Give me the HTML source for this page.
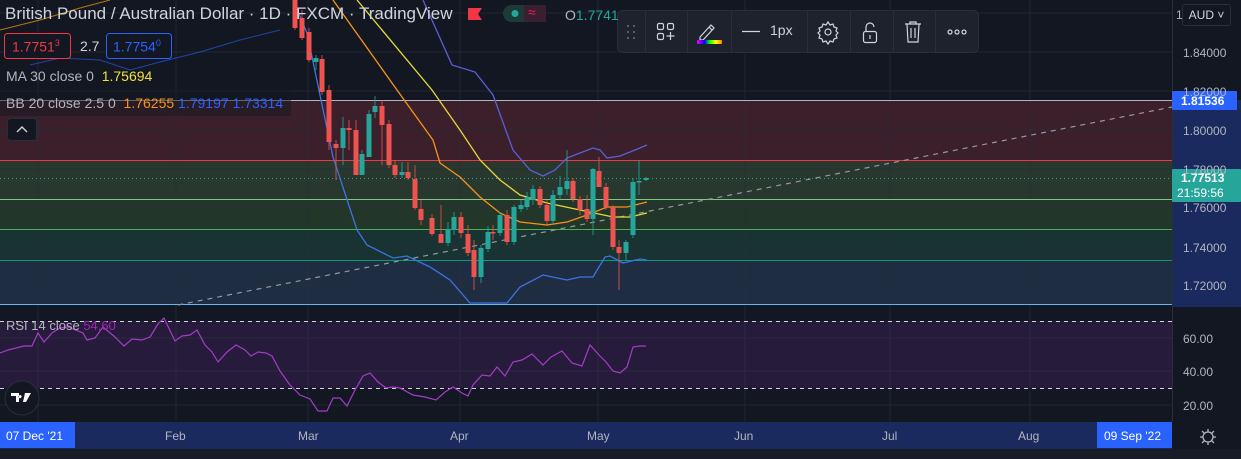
<!DOCTYPE html><html><head><meta charset="utf-8"><style>
body{margin:0;width:1241px;height:459px;background:#131722;overflow:hidden;font-family:"Liberation Sans",sans-serif;position:relative}
.a{position:absolute;white-space:nowrap}
.pl{position:absolute;left:1183px;font-size:12px;color:#b2b5be}
.tl{position:absolute;top:429px;font-size:12px;color:#b2b5be}
</style></head><body>
<svg class="a" style="left:0;top:0" width="1241" height="459">
<!-- zones -->
<rect x="0" y="100" width="1172" height="61" fill="#3b1f2b"/>
<rect x="0" y="161" width="1172" height="38" fill="#29382f"/>
<rect x="0" y="199" width="1172" height="30" fill="#22362a"/>
<rect x="0" y="229" width="1172" height="31" fill="#183331"/>
<rect x="0" y="260" width="1172" height="44" fill="#1e2d42"/>
<rect x="0" y="321" width="1172" height="67" fill="#271b3b"/>
<!-- grid -->
<g stroke="#2a2e39" stroke-opacity=".7" stroke-width="1">
<path d="M0 13H1172M0 52H1172M0 91H1172M0 130H1172M0 169H1172M0 207H1172M0 247H1172M0 285H1172M0 338H1172M0 371H1172M0 405H1172"/>
<path d="M38 0V422M176 0V422M308 0V422M460 0V422M598 0V422M745 0V422M890 0V422M1030 0V422"/>
</g>
<!-- zone lines -->
<path d="M0 100.5H1172" stroke="#b2b5be" stroke-width="1"/>
<path d="M0 160.5H1172" stroke="#f23645"/>
<path d="M0 199.5H1172" stroke="#81c784"/>
<path d="M0 229.5H1172" stroke="#4caf50"/>
<path d="M0 260.5H1172" stroke="#089981"/>
<path d="M0 304.5H1172" stroke="#64b5f6"/>
<path d="M0 178.5H1172" stroke="#26a69a" stroke-dasharray="1 3"/>
<path d="M178 305L1172 107" stroke="#9598a1" stroke-width="1.2" stroke-dasharray="5 5"/>
<!-- price axis bg -->
<rect x="1172" y="100" width="69" height="207" fill="#1b2a5e"/>
<path d="M1172.5 0V452" stroke="#2a2e39"/>
<!-- top-left leftovers -->
<polyline fill="none" stroke="#f7a600" stroke-opacity=".7" points="0,30 40,20 80,8 110,0"/>
<polyline fill="none" stroke="#2962ff" stroke-opacity=".6" points="30,65 60,58 100,60 130,70 160,62 200,52 240,40 280,30"/>
<!-- BB / MA lines -->
<polyline fill="none" stroke="#f7931a" stroke-width="1.3" points="333,0 397,90 433,140 440,163 460,177 480,197 500,213 520,222 547,225 567,222 587,215 607,207 627,207 647,202"/>
<polyline fill="none" stroke="#e5d93a" stroke-width="1.3" points="357,0 432,90 460,130 480,160 500,180 520,195 547,203 580,210 613,217 630,217 647,213"/>
<polyline fill="none" stroke="#5b5fd6" stroke-width="1.3" points="423,0 452,65 475,72 493,95 513,150 530,170 543,176 555,170 567,158 580,153 593,148 600,150 607,158 620,156 635,150 647,145"/>
<polyline fill="none" stroke="#3b74e0" stroke-width="1.3" points="293,0 307,33 333,157 357,230 367,245 393,258 407,256 430,267 450,280 470,303 507,303 520,287 543,275 567,280 580,277 593,277 605,257 610,256 623,263 640,259 647,260"/>
<!-- candles -->
<g id="c"></g>
<!-- RSI -->
<path d="M0 321.5H1172M0 388.5H1172" stroke="#d1d4dc" stroke-dasharray="4 4"/>
<polyline fill="none" stroke="#a43cc7" stroke-width="1.2" points="0,353 8,350 24,346 32,346 38,333 44,342 52,333 60,328 68,327 83,333 87,340 95,338 103,327 115,337 124,346 132,339 142,340 150,337 158,324 164,318 175,341 182,336 190,335 197,330 205,345 212,352 218,362 227,352 236,345 245,350 251,356 258,352 266,353 272,356 280,371 290,385 300,395 310,399 318,411 327,411 333,398 340,398 347,406 355,390 363,376 370,373 378,382 386,388 393,387 400,388 413,395 425,397 436,400 445,392 453,387 462,393 468,396 473,385 482,375 490,376 497,367 505,376 513,362 522,360 532,354 543,365 551,357 562,351 572,363 582,366 590,345 600,356 606,362 613,371 620,373 627,367 633,347 640,346 646,346"/>
<!-- time axis -->
<rect x="0" y="422" width="1241" height="27" fill="#1b2a5e"/>
<rect x="0" y="449" width="1241" height="10" fill="#181c27"/>
<rect x="0" y="422" width="75" height="26" fill="#2962ff"/>
<rect x="1097" y="422" width="75" height="26" fill="#2962ff"/>
<rect x="1172" y="422" width="69" height="27" fill="#131722"/>
<circle cx="1208" cy="437" r="5" fill="none" stroke="#b2b5be" stroke-width="1.3"/>
<path d="M1208 429v3M1208 442v3M1200 437h3M1213 437h3M1202 431l2 2M1212 441l2 2M1214 431l-2 2M1204 441l-2 2" stroke="#b2b5be" stroke-width="1.3"/>
<!-- logo -->
<circle cx="22" cy="398" r="17" fill="#131722" stroke="#2a2e39"/>
<path d="M11 393h8v9h-3v-6h-5z M20 395a1.6 1.6 0 1 0 .1 0z M25 393h6l-5 9h-3z" fill="#fff"/>
<!-- price labels -->
<rect x="1172" y="91" width="65" height="19" fill="#2962ff" rx="1"/>
<rect x="1172" y="169" width="69" height="33" fill="#26a69a" rx="1"/>
<!-- toolbar -->
<rect x="617.5" y="10.5" width="361" height="42" rx="5" fill="#1e222d" stroke="#2a2e39"/>
<path d="M645.5 11V52M687.5 11V52M731.5 11V52M807.5 11V52M850.5 11V52M893.5 11V52M935.5 11V52" stroke="#2a2e39"/>
<g fill="#6a6d78"><circle cx="628" cy="26" r="1"/><circle cx="634" cy="26" r="1"/><circle cx="628" cy="32" r="1"/><circle cx="634" cy="32" r="1"/><circle cx="628" cy="38" r="1"/><circle cx="634" cy="38" r="1"/></g>
<g fill="none" stroke="#d1d4dc" stroke-width="1.2">
<rect x="657.5" y="23.5" width="6" height="6" rx="1.5"/><rect x="667.5" y="23.5" width="6" height="6" rx="1.5"/><rect x="657.5" y="33.5" width="6" height="6" rx="1.5"/>
<path d="M670.5 32v8M666.5 36h8"/>
<path d="M700 37l11-12 3 3-11 12h-3z M709 27l3 3"/>
<path d="M742 31.5h18"/>
<circle cx="828" cy="32" r="3"/>
<path d="M828 22l2 3 3-1 1 3 3 1-1 3 2 2-2 2 1 3-3 1-1 3-3-1-2 3-2-3-3 1-1-3-3-1 1-3-2-2 2-2-1-3 3-1 1-3 3 1z"/>
<rect x="863.5" y="31.5" width="13" height="11" rx="2"/><path d="M866 31v-4a4 4 0 0 1 8 0" /><path d="M870 35v4"/>
<path d="M905 24h16M910 24v-2h6v2M907 24l1 18h10l1-18M911 28v10M915 28v10"/>
<circle cx="950" cy="32" r="2"/><circle cx="957" cy="32" r="2"/><circle cx="964" cy="32" r="2"/>
</g>
<defs><linearGradient id="rb"><stop offset="0" stop-color="#f0f"/><stop offset=".3" stop-color="#00f"/><stop offset=".5" stop-color="#0f0"/><stop offset=".75" stop-color="#ff0"/><stop offset="1" stop-color="#f80"/></linearGradient></defs>
<rect x="697" y="40" width="25" height="4" rx="1" fill="url(#rb)"/>
<!-- header overlays -->
<rect x="0" y="90" width="291" height="26" fill="#131722" fill-opacity=".5"/>
<rect x="7.5" y="118.5" width="29" height="22" rx="3" fill="#131722" stroke="#2a2e39"/>
<path d="M17 132l5-5 5 5" fill="none" stroke="#d1d4dc" stroke-width="1.4"/>
<rect x="4.5" y="33.5" width="66" height="25" rx="3" fill="#131722" stroke="#f23645"/>
<rect x="106.5" y="33.5" width="65" height="25" rx="3" fill="#131722" stroke="#2962ff"/>
<path d="M468 8h14l-4 6 4 6h-14z" fill="#f23645"/>
<rect x="503" y="5" width="43" height="17" rx="8.5" fill="#1e3a36"/>
<rect x="524" y="5" width="22" height="17" fill="#3a1f2e"/>
<circle cx="515" cy="13.5" r="3.5" fill="#26a69a"/>
</svg>
<div class="a" style="left:5px;top:4px;font-size:17px;color:#d1d4dc">British Pound / Australian Dollar · 1D · FXCM · TradingView</div>
<div class="a" style="left:528px;top:4px;font-size:14px;color:#e91e63">≈</div>
<div class="a" style="left:565px;top:7px;font-size:14px;color:#b2b5be">O<span style="color:#26a69a">1.7741</span></div>
<div class="a" style="left:12px;top:38px;font-size:14px;color:#f23645">1.7751<sup style="font-size:9px">3</sup></div>
<div class="a" style="left:80px;top:38px;font-size:14px;color:#d1d4dc">2.7</div>
<div class="a" style="left:113px;top:38px;font-size:14px;color:#2962ff">1.7754<sup style="font-size:9px">0</sup></div>
<div class="a" style="left:6px;top:68px;font-size:14px;color:#b2b5be">MA 30 close 0 &nbsp;<span style="color:#f2e33a">1.75694</span></div>
<div class="a" style="left:6px;top:95px;font-size:14px;color:#b2b5be">BB 20 close 2.5 0 &nbsp;<span style="color:#f7931a">1.76255</span> <span style="color:#2962ff">1.79197 1.73314</span></div>
<div class="a" style="left:6px;top:318px;font-size:13px;color:#b2b5be">RSI 14 close <span style="color:#9c27b0">54.60</span></div>
<div class="a" style="left:742px;top:22px;font-size:14px;color:#d1d4dc;left:770px">1px</div>
<div class="a" style="left:1182px;top:4px;width:47px;height:20px;border:1px solid #2a2e39;border-radius:3px;font-size:12px;color:#d1d4dc;line-height:20px;text-align:center">AUD ˅</div>
<div class="pl" style="top:8px;left:1176px">1</div>
<div class="pl" style="top:46px">1.84000</div>
<div class="pl" style="top:85px">1.82000</div>
<div class="pl" style="top:124px">1.80000</div>
<div class="pl" style="top:163px">1.78000</div>
<div class="pl" style="top:201px">1.76000</div>
<div class="pl" style="top:241px">1.74000</div>
<div class="pl" style="top:279px">1.72000</div>
<div class="pl" style="top:332px">60.00</div>
<div class="pl" style="top:365px">40.00</div>
<div class="pl" style="top:399px">20.00</div>
<div class="pl" style="top:94px;left:1181px;color:#fff;font-weight:bold">1.81536</div>
<div class="pl" style="top:171px;left:1181px;color:#fff;font-weight:bold">1.77513</div>
<div class="pl" style="top:186px;left:1177px;color:#fff">21:59:56</div>
<div class="tl" style="left:6px;color:#fff">07 Dec '21</div>
<div class="tl" style="left:165px">Feb</div>
<div class="tl" style="left:298px">Mar</div>
<div class="tl" style="left:450px">Apr</div>
<div class="tl" style="left:587px">May</div>
<div class="tl" style="left:734px">Jun</div>
<div class="tl" style="left:882px">Jul</div>
<div class="tl" style="left:1018px">Aug</div>
<div class="tl" style="left:1104px;color:#fff">09 Sep '22</div>
<script>
var d=[[295,0,28,0,30,0],[302,18,38,10,40,0],[309,32,60,28,62,0],[316,58,62,55,70,1],[322,59,92,55,95,0],[329,90,142,85,150,0],[336,144,148,140,180,0],[343,128,148,117,165,1],[349,128,130,120,150,0],[356,130,175,120,175,0],[362,154,175,150,175,1],[369,114,157,110,157,1],[375,106,112,96,118,1],[382,106,125,100,165,0],[389,124,165,120,168,0],[395,165,175,160,178,0],[402,172,175,162,178,1],[408,172,178,162,180,0],[415,179,208,165,210,0],[421,209,220,200,225,0],[432,218,234,214,236,0],[441,234,243,205,243,0],[448,229,243,222,246,1],[454,217,230,212,235,1],[461,217,233,212,238,0],[468,234,253,225,256,0],[474,250,277,240,290,0],[481,248,277,245,283,1],[488,232,249,226,252,1],[493,232,233,225,240,0],[500,215,233,212,236,1],[507,215,242,210,245,0],[514,207,242,205,245,1],[521,205,209,200,212,1],[527,197,207,192,210,1],[533,189,200,185,205,1],[540,189,205,186,208,0],[547,205,221,200,226,0],[553,195,221,190,223,1],[560,187,195,176,200,1],[567,181,189,150,195,1],[573,181,199,178,202,0],[580,199,210,196,215,0],[587,209,219,195,222,0],[593,169,219,168,235,1],[599,171,187,157,187,0],[606,187,207,183,210,0],[613,207,247,205,250,0],[619,247,253,240,290,0],[626,242,253,240,260,1],[633,182,235,178,238,1],[639,181,182,160,195,1],[646,178,180,177,181,1]];
var s='';d.forEach(function(c){var col=c[5]?'#26a69a':'#ef5350';s+='<line x1="'+c[0]+'" x2="'+c[0]+'" y1="'+c[3]+'" y2="'+c[4]+'" stroke="'+col+'" stroke-opacity=".8"/><rect x="'+(c[0]-2.5)+'" y="'+c[1]+'" width="5" height="'+Math.max(1.5,c[2]-c[1])+'" fill="'+col+'"/>';});
document.getElementById('c').innerHTML=s;
</script>
</body></html>
